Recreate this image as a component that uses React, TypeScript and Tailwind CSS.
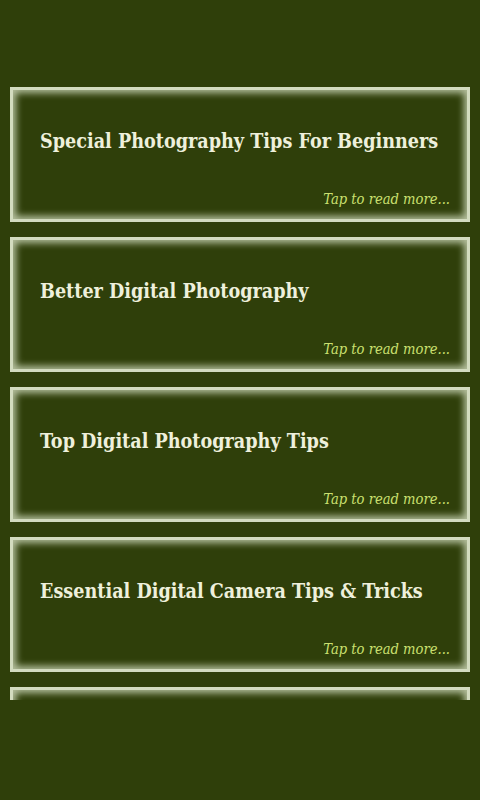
import React from "react";

const items = [
  "Special Photography Tips For Beginners",
  "Better Digital Photography",
  "Top Digital Photography Tips",
  "Essential Digital Camera Tips & Tricks",
];

const serif = '"DejaVu Serif Condensed", "DejaVu Serif", "Liberation Serif", serif';

function Card({ title }: { title?: string }) {
  return (
    <div className="h-[135px] shrink-0 flex flex-col border-[3px] border-[#d3dcc0] bg-[#2f3f0a] shadow-[inset_0_0_7px_3px_rgba(205,215,185,0.85)] pl-[27px] pr-[17px] pt-[38px] pb-[10px]">
      {title && (
        <>
          <div
            className="text-[19.6px] leading-[28px] font-bold text-[#eef0dc] whitespace-nowrap"
            style={{ fontFamily: serif }}
          >
            {title}
          </div>
          <div
            className="mt-auto self-end text-[14.6px] leading-[20px] italic text-[#cbe070]"
            style={{ fontFamily: serif }}
          >
            Tap to read more...
          </div>
        </>
      )}
    </div>
  );
}

export default function App() {
  return (
    <div className="h-[800px] w-[480px] bg-[#2f3f0a] pt-[87px] overflow-hidden">
      <div className="h-[613px] overflow-hidden px-[10px] flex flex-col gap-[15px]">
        {items.map((t) => (
          <Card key={t} title={t} />
        ))}
        <Card />
      </div>
    </div>
  );
}
